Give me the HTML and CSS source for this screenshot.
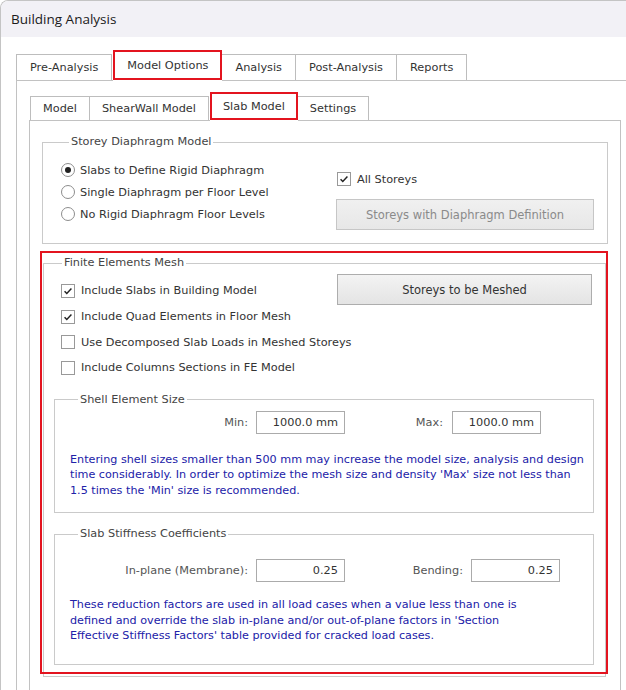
FILE: index.html
```html
<!DOCTYPE html>
<html>
  <head>
    <meta charset="UTF-8" />
    <title>Building Analysis</title>
    <link rel="stylesheet" href="styles.css">
  </head>
  <body>
    <div class="window">
      <div class="titlebar">Building Analysis</div>

      <div class="main">
        <div class="tabs">
          <span class="tab">Pre-Analysis</span>
          <span class="tab active">Model Options</span>
          <span class="tab">Analysis</span>
          <span class="tab">Post-Analysis</span>
          <span class="tab">Reports</span>
        </div>

        <div class="panel outer">
          <div class="tabs sub_tabs">
            <span class="tab">Model</span>
            <span class="tab">ShearWall Model</span>
            <span class="tab active">Slab Model</span>
            <span class="tab">Settings</span>
          </div>

          <div class="panel inner">
            <fieldset class="group storey">
              <legend>Storey Diaphragm Model</legend>
              <div class="group_row">
                <div class="options">
                  <label class="opt"><span class="radio on"></span>Slabs to Define Rigid Diaphragm</label>
                  <label class="opt"><span class="radio"></span>Single Diaphragm per Floor Level</label>
                  <label class="opt"><span class="radio"></span>No Rigid Diaphragm Floor Levels</label>
                </div>
                <div class="side">
                  <label class="opt"><span class="check on"><svg viewBox="0 0 14 14"><path d="M3 7.2l2.6 2.7L11 4.2" /></svg></span>All Storeys</label>
                  <button class="btn" disabled>Storeys with Diaphragm Definition</button>
                </div>
              </div>
            </fieldset>

            <div class="highlight">
              <fieldset class="group mesh">
                <legend>Finite Elements Mesh</legend>
                <div class="group_row">
                  <div class="options checks">
                    <label class="opt"><span class="check on"><svg viewBox="0 0 14 14"><path d="M3 7.2l2.6 2.7L11 4.2" /></svg></span>Include Slabs in Building Model</label>
                    <label class="opt"><span class="check on"><svg viewBox="0 0 14 14"><path d="M3 7.2l2.6 2.7L11 4.2" /></svg></span>Include Quad Elements in Floor Mesh</label>
                    <label class="opt"><span class="check"></span>Use Decomposed Slab Loads in Meshed Storeys</label>
                    <label class="opt"><span class="check"></span>Include Columns Sections in FE Model</label>
                  </div>
                  <div class="side mesh_side">
                    <button class="btn">Storeys to be Meshed</button>
                  </div>
                </div>

                <fieldset class="group sub shell">
                  <legend>Shell Element Size</legend>
                  <div class="field_row">
                    <label class="lbl lbl_a">Min:</label>
                    <input class="num" type="text" value="1000.0 mm" readonly />
                    <label class="lbl lbl_b">Max:</label>
                    <input class="num" type="text" value="1000.0 mm" readonly />
                  </div>
                  <p class="note">Entering shell sizes smaller than 500 mm may increase the model size, analysis and design<br>time considerably. In order to optimize the mesh size and density 'Max' size not less than<br>1.5 times the 'Min' size is recommended.</p>
                </fieldset>

                <fieldset class="group sub stiff">
                  <legend>Slab Stiffness Coefficients</legend>
                  <div class="field_row">
                    <label class="lbl lbl_a">In-plane (Membrane):</label>
                    <input class="num" type="text" value="0.25" readonly />
                    <label class="lbl lbl_c">Bending:</label>
                    <input class="num" type="text" value="0.25" readonly />
                  </div>
                  <p class="note">These reduction factors are used in all load cases when a value less than one is<br>defined and override the slab in-plane and/or out-of-plane factors in 'Section<br>Effective Stiffness Factors' table provided for cracked load cases.</p>
                </fieldset>
              </fieldset>
            </div>
          </div>
        </div>
      </div>
    </div>
  </body>
</html>
```

FILE: styles.css
```css
body {
  margin: 0;
  background: #fff;
}

.window {
  width: 626px;
  height: 690px;
  overflow: hidden;
  box-sizing: border-box;
  border-top: 1px solid #c4c4c4;
  border-left: 1px solid #c4c4c4;
  border-top-left-radius: 8px;
  font-family: "DejaVu Sans", sans-serif;
  font-size: 11.3px;
  color: #333;
}

.titlebar {
  height: 36px;
  line-height: 36px;
  padding-left: 10px;
  background: #f2f1f6;
  font-family: "Open Sans", sans-serif;
  font-size: 13.5px;
  color: #1b1b1b;
}

.main {
  padding: 13px 0 0 15px;
}

/* tab strips */
.tabs {
  display: flex;
  align-items: flex-end;
  height: 30px;
}

.tab {
  box-sizing: border-box;
  height: 26px;
  line-height: 25px;
  padding: 0 13px;
  border: 1px solid #bdbdbd;
  border-bottom: none;
  border-left: none;
  background: #fff;
  color: #333;
  white-space: nowrap;
}

.tab:first-child {
  border-left: 1px solid #bdbdbd;
}

.tab.active {
  position: relative;
  height: 30px;
  line-height: 28px;
  padding: 0 12px;
  margin-left: 1px;
  border: 2px solid #e3141f;
}

.tab.active::after {
  content: "";
  position: absolute;
  left: -2px;
  right: -2px;
  bottom: -3px;
  height: 1px;
  background: #fff;
}

.sub_tabs {
  height: 28px;
  margin-left: 1px;
}

.sub_tabs .tab {
  height: 24px;
  line-height: 23px;
  padding: 0 12px;
}

.sub_tabs .tab.active {
  height: 28px;
  line-height: 25px;
  padding: 0 11px;
}

/* panels */
.panel {
  border: 1px solid #c2c2c2;
  background: #fff;
}

.panel.outer {
  margin-right: -30px;
  height: 640px;
  padding: 11px 0 0 12px;
}

.panel.inner {
  width: 566px;
  height: 600px;
  padding: 14px 12px 0 12px;
}

/* group boxes */
.group {
  margin: 0;
  border: 1px solid #cacaca;
  min-width: 0;
}

.group legend {
  padding: 0 2px;
  margin-left: 8px;
  line-height: 14px;
  color: #444;
}

.group_row {
  display: flex;
  justify-content: space-between;
}

.storey {
  padding: 10px 13px 13px 18px;
}

.opt {
  display: flex;
  align-items: center;
  height: 22px;
  white-space: nowrap;
}

.radio {
  position: relative;
  flex-shrink: 0;
  box-sizing: border-box;
  width: 14px;
  height: 14px;
  margin-right: 5px;
  border: 1px solid #8d8d8d;
  border-radius: 50%;
  background: #fff;
}

.radio.on::after {
  content: "";
  position: absolute;
  top: 3px;
  left: 3px;
  width: 6px;
  height: 6px;
  border-radius: 50%;
  background: #222;
}

.check {
  flex-shrink: 0;
  box-sizing: border-box;
  width: 14px;
  height: 14px;
  margin-right: 6px;
  border: 1px solid #999;
  background: #fff;
}

.check svg {
  display: block;
  width: 12px;
  height: 12px;
}

.check path {
  fill: none;
  stroke: #222;
  stroke-width: 1.7;
}

.side {
  display: flex;
  flex-direction: column;
  flex-shrink: 0;
  width: 258px;
  padding-top: 10px;
}

.side .opt {
  height: 20px;
  margin-left: 1px;
}

.btn {
  display: block;
  width: 258px;
  height: 31px;
  margin-top: 10px;
  border: 1px solid #adadad;
  background: linear-gradient(#f3f3f3, #e4e4e4);
  font-family: "DejaVu Sans", sans-serif;
  font-size: 11.5px;
  color: #333;
}

.btn:disabled {
  border-color: #c6c6c6;
  background: linear-gradient(#f0f0f0, #e7e7e7);
  color: #8a8a8a;
}

/* finite elements group */
.highlight {
  position: relative;
  margin: 12px 2px 0 1px;
}

.highlight::after {
  content: "";
  position: absolute;
  top: -5px;
  left: -3px;
  right: -2px;
  bottom: 3px;
  border: 2px solid #e3141f;
  pointer-events: none;
}

.mesh {
  padding: 0 11px 11px 10px;
}

.checks {
  flex: 1 1 0;
  min-width: 0;
  padding: 8px 0 0 7px;
}

.checks .opt {
  height: 25.7px;
}

.mesh_side {
  width: 255px;
  padding-top: 4px;
  margin-right: 2px;
}

.mesh_side .btn {
  width: 255px;
  margin-top: 0;
}

.sub {
  padding: 0 8px 14px 15px;
}

.shell {
  margin-top: 12px;
}

.stiff {
  margin-top: 14px;
  padding-bottom: 20px;
}

.field_row {
  display: flex;
  align-items: center;
  margin-top: 4px;
}

.stiff .field_row {
  margin-top: 18px;
}

.lbl {
  text-align: right;
  color: #555;
}

.lbl_a {
  width: 178px;
  margin-right: 8px;
}

.lbl_b {
  width: 98px;
  margin-right: 9px;
}

.lbl_c {
  width: 118px;
  margin-right: 8px;
}

.num {
  box-sizing: border-box;
  width: 89px;
  height: 23px;
  padding: 0 6px 0 0;
  border: 1px solid #ababab;
  text-align: right;
  font-family: "DejaVu Sans", sans-serif;
  font-size: 11.3px;
  color: #333;
  outline: none;
}

.note {
  margin: 18px 0 0 0;
  font-size: 11.2px;
  line-height: 15.5px;
  white-space: nowrap;
  color: #2121a8;
}

.stiff .note {
  margin-top: 15px;
}
```
